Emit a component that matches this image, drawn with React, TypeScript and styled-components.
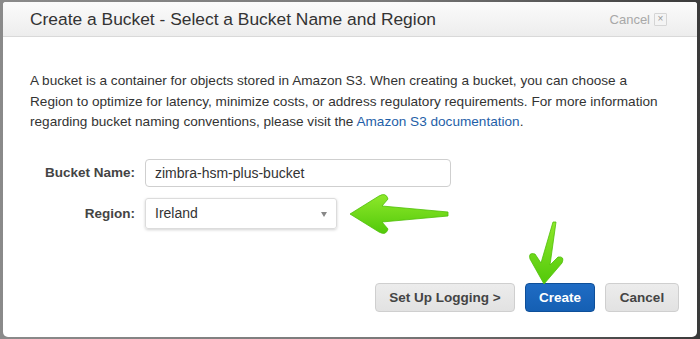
import React from "react";
import styled, { createGlobalStyle } from "styled-components";

const Global = createGlobalStyle`
  html, body { margin: 0; padding: 0; }
  body {
    width: 700px;
    height: 339px;
    overflow: hidden;
    background: linear-gradient(to right, #8a8a8a 0%, #7a7a7a 55%, #3a3a3a 100%);
    font-family: "Liberation Sans", Helvetica, Arial, sans-serif;
  }
`;

const Page = styled.div`
  padding: 2px 3px 2px 3px;
  box-sizing: border-box;
  width: 700px;
  height: 339px;
`;

const Dialog = styled.div`
  position: relative;
  width: 694px;
  height: 335px;
  background: #fff;
  border-radius: 3px 3px 5px 5px;
  display: flex;
  flex-direction: column;
  box-sizing: border-box;
`;

const Header = styled.div`
  height: 34px;
  border-bottom: 1px solid #d9d9d9;
  background: linear-gradient(to bottom, #fbfbfb, #ededed);
  display: flex;
  align-items: center;
  justify-content: space-between;
  padding: 0 30px 0 27px;
  border-radius: 3px 3px 0 0;
`;

const Title = styled.h1`
  margin: 0;
  font-size: 17.4px;
  font-weight: normal;
  color: #333;
`;

const CloseLink = styled.div`
  display: flex;
  align-items: center;
  gap: 4px;
  font-size: 13px;
  color: #a8a8a8;
`;

const CloseBox = styled.span`
  width: 11px;
  height: 11px;
  border: 1px solid #d5d5d5;
  background: #f4f4f4;
  border-radius: 1px;
  display: flex;
  align-items: center;
  justify-content: center;
  font-size: 10px;
  line-height: 1;
  color: #999;
`;

const Intro = styled.p`
  margin: 34px 0 0 0;
  padding: 0 27px;
  font-size: 13.6px;
  line-height: 20.5px;
  color: #333;
  white-space: nowrap;
`;

const DocLink = styled.a`
  color: #1f5fa8;
  text-decoration: none;
`;

const Form = styled.div`
  margin-top: 26px;
  padding-left: 30px;
  display: grid;
  grid-template-columns: 102px auto;
  column-gap: 10px;
  row-gap: 11px;
  align-items: center;
  justify-content: start;
`;

const Label = styled.label`
  text-align: right;
  font-size: 13.5px;
  font-weight: bold;
  color: #444;
`;

const TextInput = styled.div`
  width: 306px;
  height: 28px;
  box-sizing: border-box;
  border: 1px solid #cfcfcf;
  border-radius: 4px;
  padding: 0 9px;
  display: flex;
  align-items: center;
  font-size: 14px;
  color: #333;
`;

const Select = styled.div`
  width: 192px;
  height: 31px;
  box-sizing: border-box;
  border: 1px solid #dcdcdc;
  border-radius: 3px;
  box-shadow: 0 1px 3px rgba(0, 0, 0, 0.18);
  padding: 0 9px;
  display: flex;
  align-items: center;
  justify-content: space-between;
  font-size: 14px;
  color: #333;
`;

const Caret = styled.span`
  width: 0;
  height: 0;
  border-left: 3.5px solid transparent;
  border-right: 3.5px solid transparent;
  border-top: 5px solid #888;
  margin-top: 2px;
`;

const Footer = styled.div`
  margin-top: 54px;
  padding-right: 18px;
  display: flex;
  justify-content: flex-end;
  gap: 10px;
`;

const Button = styled.button<{ $primary?: boolean; $w: number }>`
  width: ${(p) => p.$w}px;
  height: 29px;
  border-radius: 4px;
  font-family: "Liberation Sans", Helvetica, Arial, sans-serif;
  font-size: 13.5px;
  font-weight: bold;
  cursor: pointer;
  padding: 0;
  border: 1px solid ${(p) => (p.$primary ? "#0e4f99" : "#cfcfcf")};
  background: ${(p) =>
    p.$primary
      ? "linear-gradient(to bottom, #1f6cc4, #155fb3)"
      : "linear-gradient(to bottom, #ececec, #e2e2e2)"};
  color: ${(p) => (p.$primary ? "#fff" : "#444")};
`;

const ArrowLeft = styled.svg`
  position: absolute;
  left: 342px;
  top: 188px;
  overflow: visible;
`;

const ArrowDown = styled.svg`
  position: absolute;
  left: 522px;
  top: 216px;
  overflow: visible;
`;

function GreenDefs({ id }: { id: string }) {
  return (
    <defs>
      <linearGradient id={id} x1="0" y1="0" x2="0" y2="1">
        <stop offset="0" stopColor="#8ee82a" />
        <stop offset="1" stopColor="#52c90a" />
      </linearGradient>
    </defs>
  );
}

export default function App() {
  return (
    <>
      <Global />
      <Page>
        <Dialog>
          <Header>
            <Title>Create a Bucket - Select a Bucket Name and Region</Title>
            <CloseLink>
              Cancel <CloseBox>×</CloseBox>
            </CloseLink>
          </Header>
          <Intro>
            A bucket is a container for objects stored in Amazon S3. When creating a bucket, you can choose a
            <br />
            Region to optimize for latency, minimize costs, or address regulatory requirements. For more information
            <br />
            regarding bucket naming conventions, please visit the <DocLink>Amazon S3 documentation</DocLink>.
          </Intro>
          <Form>
            <Label>Bucket Name:</Label>
            <TextInput>zimbra-hsm-plus-bucket</TextInput>
            <Label>Region:</Label>
            <Select>
              Ireland
              <Caret />
            </Select>
          </Form>
          <Footer>
            <Button $w={140}>Set Up Logging &gt;</Button>
            <Button $w={70} $primary>
              Create
            </Button>
            <Button $w={74}>Cancel</Button>
          </Footer>
          <ArrowLeft width="106" height="48" viewBox="0 0 106 48">
            <GreenDefs id="gl" />
            <path
              d="M5 24 L34 6 Q41 2 43 9 L37 16 L103 22 L103 26 L37 32 L43 39 Q41 46 34 42 Z"
              fill="url(#gl)"
              stroke="#4fbf08"
              strokeWidth="0.8"
              strokeLinejoin="round"
            />
          </ArrowLeft>
          <ArrowDown width="44" height="70" viewBox="0 0 44 70">
            <GreenDefs id="gd" />
            <path
              d="M19 66 L5 41 Q3 34 10 36 L16 45 L28 4 L31 4 L25 47 L33 39 Q40 38 37 45 Z"
              fill="url(#gd)"
              stroke="#4fbf08"
              strokeWidth="0.8"
              strokeLinejoin="round"
            />
          </ArrowDown>
        </Dialog>
      </Page>
    </>
  );
}
